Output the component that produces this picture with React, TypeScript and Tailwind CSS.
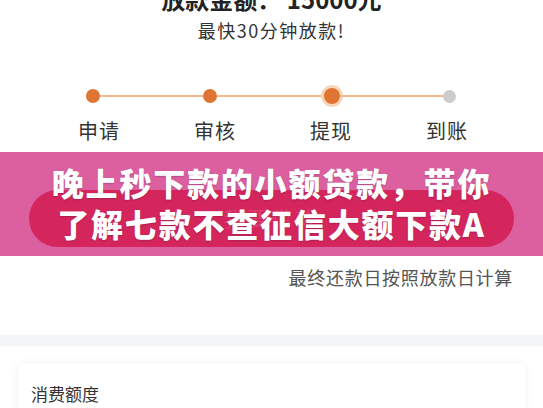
const steps = ['申请', '审核', '提现', '到账']

export default function App() {
  return (
    <div
      className="relative h-[408px] w-[543px] overflow-hidden bg-white"
      style={{ fontFamily: '"Noto Sans CJK SC", "Noto Sans", sans-serif' }}
    >
      {/* header */}
      <div className="flex flex-col items-center">
        <p className="mt-[-13px] text-[24px] leading-[24px] font-bold text-[#222]">
          放款金额： 15000元
        </p>
        <p className="mt-[10px] text-[18px] leading-[18px] tracking-[1.5px] text-[#333]">最快30分钟放款!</p>
      </div>

      {/* progress */}
      <div className="mt-[47px] ml-[86px] flex h-[20px] items-center">
        <span className="h-[14px] w-[14px] rounded-full bg-[#e07432]" />
        <span className="h-[2px] w-[103px] bg-[#f2b98c]" />
        <span className="h-[14px] w-[14px] rounded-full bg-[#e07432]" />
        <span className="h-[2px] w-[107px] bg-[#f2b98c]" />
        <span className="h-[16px] w-[16px] rounded-full bg-[#e07432] ring-[3px] ring-[#f8d6bb]" />
        <span className="h-[2px] w-[103px] bg-[#f2b98c]" />
        <span className="h-[13px] w-[13px] rounded-full bg-[#cccccc]" />
      </div>
      <div className="mt-[15px] flex gap-[76px] pl-[78px]">
        {steps.map((s) => (
          <span
            key={s}
            className="w-[40px] text-center text-[20px] leading-[20px] tracking-[1px] whitespace-nowrap text-[#333]"
          >
            {s}
          </span>
        ))}
      </div>

      {/* banner */}
      <div className="relative mt-[11px] h-[104px] bg-[#dc5fa0] pt-[38px]">
        <div className="mx-[29px] flex h-[57px] items-center justify-center rounded-full bg-[#d4265d] pt-px">
          <span className="text-[20px] tracking-[4px] text-white/15">我要借款</span>
        </div>
        <div className="absolute inset-0 flex flex-col items-center pt-[10px] text-[32px] leading-[41px] font-black tracking-[1.8px] whitespace-nowrap text-white [text-shadow:0_1px_2px_rgba(0,0,0,0.2)]">
          <span>晚上秒下款的小额贷款，带你</span>
          <span>了解七款不查征信大额下款A</span>
        </div>
      </div>

      {/* repayment note */}
      <p className="mt-[12px] pr-[30px] text-right text-[18px] leading-[18px] tracking-[0.7px] text-[#555]">
        最终还款日按照放款日计算
      </p>
      <div className="mt-[49px] h-[11px] bg-[#f4f5f7]" />

      {/* card */}
      <div className="mx-[18px] mt-[17px] h-[80px] rounded-[6px] bg-white pt-[22px] pl-[13px] shadow-[0_0_10px_rgba(0,0,0,0.06)]">
        <p className="text-[17px] leading-[17px] text-[#333]">消费额度</p>
      </div>
    </div>
  )
}
